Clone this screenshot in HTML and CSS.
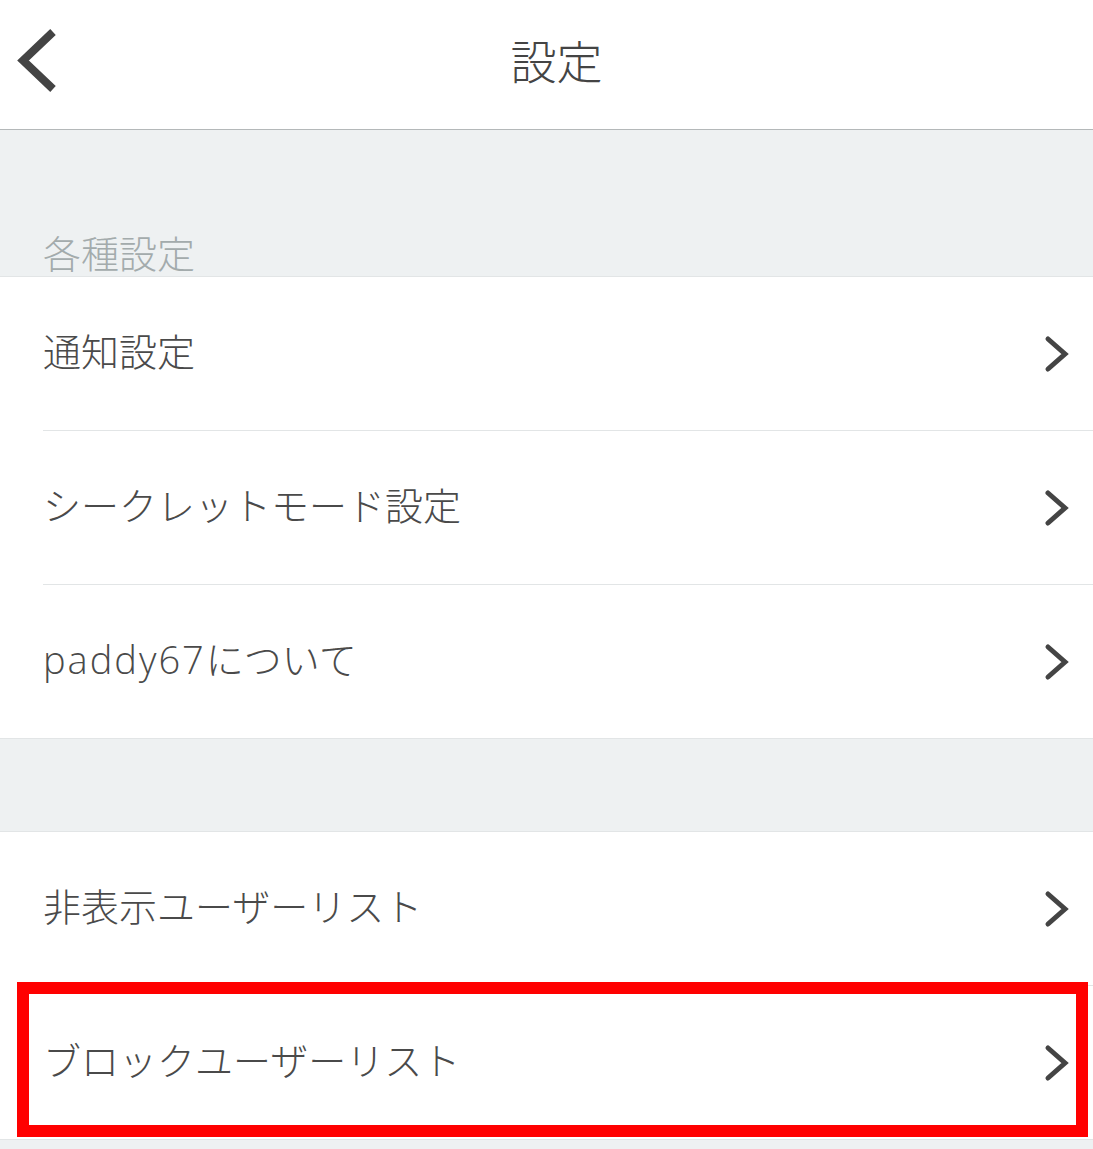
FILE: index.html
```html
<!DOCTYPE html>
<html lang="ja">
<head>
<meta charset="utf-8">
<title>設定</title>
<link rel="stylesheet" href="styles.css">
</head>
<body>
<div class="page">
  <header class="topbar">
    <svg class="back" width="70" height="129" viewBox="0 0 70 129" aria-hidden="true">
      <polyline points="53,32 23,60.5 53,89" fill="none" stroke="#444" stroke-width="8" stroke-linejoin="miter" stroke-linecap="butt"/>
    </svg>
    <h1 class="title">設定</h1>
    <div class="spacer"></div>
  </header>

  <div class="section-head"><span>各種設定</span></div>
  <ul class="list">
    <li class="row"><span class="label">通知設定</span><svg class="chev" width="30" height="40" viewBox="0 0 30 40"><polyline points="5,5 22,20 5,35" fill="none" stroke="#444" stroke-width="5" stroke-linecap="round" stroke-linejoin="miter"/></svg></li>
    <li class="row"><span class="label">シークレットモード設定</span><svg class="chev" width="30" height="40" viewBox="0 0 30 40"><polyline points="5,5 22,20 5,35" fill="none" stroke="#444" stroke-width="5" stroke-linecap="round" stroke-linejoin="miter"/></svg></li>
    <li class="row"><span class="label"><span class="latin">paddy67</span>について</span><svg class="chev" width="30" height="40" viewBox="0 0 30 40"><polyline points="5,5 22,20 5,35" fill="none" stroke="#444" stroke-width="5" stroke-linecap="round" stroke-linejoin="miter"/></svg></li>
  </ul>

  <div class="section-gap"></div>
  <ul class="list">
    <li class="row"><span class="label">非表示ユーザーリスト</span><svg class="chev" width="30" height="40" viewBox="0 0 30 40"><polyline points="5,5 22,20 5,35" fill="none" stroke="#444" stroke-width="5" stroke-linecap="round" stroke-linejoin="miter"/></svg></li>
    <li class="row"><span class="label">ブロックユーザーリスト</span><svg class="chev" width="30" height="40" viewBox="0 0 30 40"><polyline points="5,5 22,20 5,35" fill="none" stroke="#444" stroke-width="5" stroke-linecap="round" stroke-linejoin="miter"/></svg></li>
  </ul>
  <div class="footer-gap"></div>

  <div class="highlight"></div>
</div>
</body>
</html>
```

FILE: styles.css
```css
* { box-sizing: border-box; }
html, body { margin: 0; padding: 0; }
body {
  background: #ffffff;
  font-family: "Noto Sans CJK JP", "Noto Sans", sans-serif;
  font-weight: 300;
  color: #4a4a4a;
}
.page {
  position: relative;
  width: 1093px;
  min-height: 1149px;
  background: #eef1f2;
  overflow: hidden;
}
.topbar {
  display: grid;
  grid-template-columns: 1fr auto 1fr;
  align-items: center;
  height: 130px;
  background: #ffffff;
  border-bottom: 1px solid #b4b8b9;
}
.back { display: block; }
.title {
  margin: 0;
  padding: 0 0 12px 20px;
  font-size: 46px;
  font-weight: 300;
  line-height: 1;
  color: #444444;
}
.section-head {
  height: 147px;
  display: flex;
  align-items: flex-end;
  padding: 0 0 5px 43px;
  font-size: 38px;
  line-height: 1;
  color: #a3abac;
  border-bottom: 1px solid #e2e5e6;
}
.list {
  list-style: none;
  margin: 0;
  padding: 0 0 0 43px;
  background: #ffffff;
  border-bottom: 1px solid #e2e5e6;
}
.row {
  display: flex;
  align-items: center;
  justify-content: space-between;
  height: 154px;
  padding-right: 20px;
  border-bottom: 1px solid #e2e5e6;
  font-size: 38px;
  line-height: 1;
}
.label { padding-bottom: 7px; }
.latin {
  font-family: "Open Sans", "Noto Sans", sans-serif;
  font-weight: 300;
  letter-spacing: 2px;
}
.row:last-child { border-bottom: none; height: 153px; }
.chev { display: block; flex: none; }
.section-gap {
  height: 93px;
  border-bottom: 1px solid #e2e5e6;
}
.footer-gap { height: 20px; }
.highlight {
  position: absolute;
  left: 17px;
  top: 982px;
  width: 1071px;
  height: 155px;
  border: 12px solid #ff0000;
  pointer-events: none;
}
```
